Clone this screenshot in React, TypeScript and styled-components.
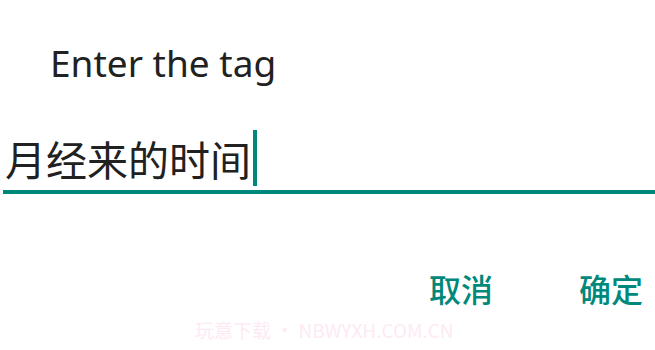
import styled, { createGlobalStyle } from "styled-components";

const teal = "#00897b";

const GlobalStyle = createGlobalStyle`
  html, body {
    margin: 0;
    padding: 0;
    background: #ffffff;
  }
  body {
    font-family: "Noto Sans", "Noto Sans CJK SC", sans-serif;
  }
`;

export default function App() {
  return (
    <>
      <GlobalStyle />
      <Dialog>
        <Title>Enter the tag</Title>
        <Field>
          <FieldText>月经来的时间</FieldText>
          <Cursor />
        </Field>
        <Actions>
          <ActionButton>取消</ActionButton>
          <ActionButton>确定</ActionButton>
        </Actions>
        <Watermark>玩意下载 • NBWYXH.COM.CN</Watermark>
      </Dialog>
    </>
  );
}

const Dialog = styled.div`
  width: 655px;
  height: 350px;
  display: flex;
  flex-direction: column;
  background: #ffffff;
  overflow: hidden;
`;

const Title = styled.div`
  margin-top: 41px;
  padding-left: 50px;
  font-family: "Noto Sans", sans-serif;
  font-size: 37px;
  line-height: 44px;
  color: #212121;
`;

const Field = styled.div`
  margin-top: 43px;
  margin-left: 3px;
  height: 66px;
  box-sizing: border-box;
  display: flex;
  align-items: flex-start;
  border-bottom: 4px solid ${teal};
`;

const FieldText = styled.span`
  margin-top: 6px;
  padding-left: 2px;
  font-family: "Noto Sans CJK SC", sans-serif;
  font-size: 41px;
  line-height: 48px;
  color: #212121;
`;

const Cursor = styled.span`
  width: 4px;
  height: 56px;
  margin-top: 2px;
  margin-left: 2px;
  background: ${teal};
`;

const Actions = styled.div`
  margin-top: 76px;
  padding-right: 12px;
  display: flex;
  justify-content: flex-end;
  gap: 86px;
`;

const ActionButton = styled.button`
  padding: 0;
  border: none;
  background: transparent;
  font-family: "Noto Sans CJK SC", sans-serif;
  font-size: 32px;
  font-weight: 500;
  line-height: 36px;
  color: ${teal};
  cursor: pointer;
`;

const Watermark = styled.div`
  margin-top: 12px;
  padding-left: 195px;
  font-family: "Noto Sans CJK SC", sans-serif;
  font-size: 19px;
  line-height: 24px;
  color: #fdeaf5;
`;
